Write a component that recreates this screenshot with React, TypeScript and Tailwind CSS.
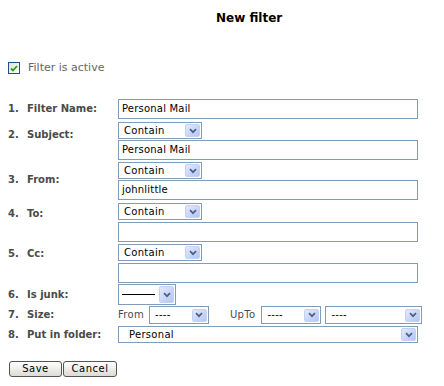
import React from 'react';

const font = { fontFamily: '"DejaVu Sans", Verdana, sans-serif' };

const Chevron = () => (
  <svg width="8" height="6" viewBox="0 0 8 6">
    <path d="M1 1.2 L4 4.2 L7 1.2" fill="none" stroke="#4d6185" strokeWidth="1.7" />
  </svg>
);

const DropButton = ({ className = 'h-[13px]' }: { className?: string }) => (
  <div
    className={`mr-px flex w-[15px] items-center justify-center rounded-[2px] border border-[#c3d1f5] bg-gradient-to-br from-[#e3eafd] to-[#b3c5f3] ${className}`}
  >
    <Chevron />
  </div>
);

const Select = ({
  text,
  className,
  textClass = 'pl-[5px]',
  buttonClass,
}: {
  text: React.ReactNode;
  className: string;
  textClass?: string;
  buttonClass?: string;
}) => (
  <div className={`flex items-center border border-[#7f9db9] bg-white ${className}`}>
    <span className={`flex-1 text-[10px] leading-[12px] tracking-[0.3px] text-black ${textClass}`}>{text}</span>
    <DropButton className={buttonClass} />
  </div>
);

const TextBox = ({ value = '' }: { value?: string }) => (
  <div className="flex h-[20px] w-[300px] items-center border border-[#7f9db9] bg-white px-[3px] text-[10px] leading-[12px] tracking-[0.2px] text-black">
    {value}
  </div>
);

const Label = ({ n, text, className = 'items-center' }: { n: string; text: string; className?: string }) => (
  <div className={`flex w-[118px] shrink-0 pl-[8px] text-[10px] font-bold leading-[12px] text-[#4a4a4a] ${className}`}>
    <span className="w-[19px]">{n}</span>
    <span>{text}</span>
  </div>
);

export default function App() {
  return (
    <div className="h-[386px] w-[444px] overflow-hidden bg-white" style={font}>
      <div className="pl-[216px] pt-[10px] text-[12px] font-bold leading-[16px] text-black">New filter</div>

      <div className="mt-[35px] flex items-center pl-[8px]">
        <div className="flex h-[12px] w-[12px] items-center justify-center border border-[#1c5180] bg-gradient-to-br from-[#e0e0db] to-white">
          <svg width="8" height="7" viewBox="0 0 8 7">
            <path d="M1 3.5 L3 5.5 L7 1" fill="none" stroke="#21a121" strokeWidth="1.8" />
          </svg>
        </div>
        <span className="ml-[8px] text-[11px] leading-[14px] text-[#666]">Filter is active</span>
      </div>

      <div className="mt-[24px] flex flex-col">
        <div className="flex">
          <Label n="1." text="Filter Name:" />
          <TextBox value="Personal Mail" />
        </div>

        <div className="mt-[3px] flex">
          <Label n="2." text="Subject:" className="items-start pt-[7px]" />
          <div className="flex flex-col gap-px">
            <Select text="Contain" className="h-[17px] w-[84px]" />
            <TextBox value="Personal Mail" />
          </div>
        </div>

        <div className="mt-[2px] flex">
          <Label n="3." text="From:" className="items-start pt-[12px]" />
          <div className="flex flex-col gap-px">
            <Select text="Contain" className="h-[17px] w-[84px]" />
            <TextBox value="johnlittle" />
          </div>
        </div>

        <div className="mt-[3px] flex">
          <Label n="4." text="To:" className="items-start pt-[5px]" />
          <div className="flex flex-col gap-[2px]">
            <Select text="Contain" className="h-[17px] w-[84px]" />
            <TextBox />
          </div>
        </div>

        <div className="mt-[2px] flex">
          <Label n="5." text="Cc:" className="items-start pt-[4px]" />
          <div className="flex flex-col gap-[2px]">
            <Select text="Contain" className="h-[17px] w-[84px]" />
            <TextBox />
          </div>
        </div>

        <div className="mt-px flex">
          <Label n="6." text="Is junk:" />
          <Select
            text={<span className="block h-px w-[33px] bg-black" />}
            className="h-[21px] w-[58px] items-stretch"
            textClass="flex items-center pl-[3px]"
            buttonClass="h-[17px] my-px"
          />
        </div>

        <div className="mt-px flex">
          <Label n="7." text="Size:" />
          <div className="flex items-center text-[10px] leading-[12px] tracking-[0.3px] text-[#4a4a4a]">
            <span>From</span>
            <Select text="----" className="ml-[5px] h-[18px] w-[60px]" />
            <span className="ml-[21px]">UpTo</span>
            <Select text="----" className="ml-[6px] h-[18px] w-[60px]" />
            <Select text="----" className="ml-[4px] h-[18px] w-[97px]" />
          </div>
        </div>

        <div className="mt-[2px] flex">
          <Label n="8." text="Put in folder:" />
          <Select text="Personal" className="h-[17px] w-[300px]" textClass="pl-[10px]" />
        </div>
      </div>

      <div className="mt-[18px] flex gap-px pl-[9px]">
        <button className="h-[16px] w-[53px] rounded-[3px] border border-[#555] bg-gradient-to-b from-white to-[#dcdcd4] text-[10px] leading-[12px] tracking-[0.5px] text-black">
          Save
        </button>
        <button className="h-[16px] w-[54px] rounded-[3px] border border-[#555] bg-gradient-to-b from-white to-[#dcdcd4] text-[10px] leading-[12px] tracking-[0.5px] text-black">
          Cancel
        </button>
      </div>
    </div>
  );
}
